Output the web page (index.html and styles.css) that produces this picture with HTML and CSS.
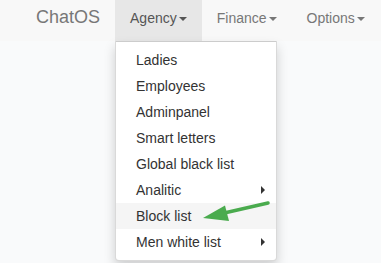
FILE: index.html
```html
<!DOCTYPE html>
<html lang="en">
<head>
    <meta charset="UTF-8">
    <title>ChatOS</title>
    <link rel="stylesheet" href="styles.css">
</head>
<body>
    <div class="navbar">
        <a class="brand" href="#">ChatOS</a>
        <ul class="nav">
            <li class="open">
                <a href="#">Agency<span class="caret"></span></a>
                <ul class="dropdown-menu">
                    <li><a href="#">Ladies</a></li>
                    <li><a href="#">Employees</a></li>
                    <li><a href="#">Adminpanel</a></li>
                    <li><a href="#">Smart letters</a></li>
                    <li><a href="#">Global black list</a></li>
                    <li class="submenu"><a href="#">Analitic<span class="arrow"></span></a></li>
                    <li class="hover"><a href="#">Block list</a></li>
                    <li class="submenu"><a href="#">Men white list<span class="arrow"></span></a></li>
                </ul>
            </li>
            <li><a href="#">Finance<span class="caret"></span></a></li>
            <li><a href="#">Options<span class="caret"></span></a></li>
        </ul>
    </div>

    <svg class="pointer" width="381" height="263" viewBox="0 0 381 263">
        <line x1="268" y1="203" x2="222" y2="213.5" stroke="#4aab4e" stroke-width="3.5" stroke-linecap="round"/>
        <polygon points="203,218 225,205.5 229,221" fill="#4aab4e"/>
    </svg>
</body>
</html>
```

FILE: styles.css
```css
body {
    margin: 0;
    font-family: "Liberation Sans", Arial, sans-serif;
    font-size: 14px;
    line-height: 20px;
    color: #333;
    background-color: #f9fafb;
    height: 263px;
    overflow: hidden;
}

.navbar {
    display: flex;
    height: 41px;
    padding-left: 21px;
    background-color: #f8f8f8;
}

.brand {
    padding: 7px 15px;
    font-size: 18px;
    line-height: 20px;
    color: #777;
    text-decoration: none;
}

.nav {
    display: flex;
    list-style: none;
    margin: 0;
    padding: 0;
}

.nav > li {
    position: relative;
}

.nav > li > a {
    display: block;
    height: 41px;
    box-sizing: border-box;
    padding: 8px 15px 13px;
    color: #777;
    text-decoration: none;
}

.nav > li.open > a {
    background-color: #e7e7e7;
    color: #555;
}

.caret {
    display: inline-block;
    width: 0;
    height: 0;
    margin-left: 2px;
    vertical-align: middle;
    border-top: 4px solid;
    border-left: 4px solid transparent;
    border-right: 4px solid transparent;
}

.dropdown-menu {
    position: absolute;
    top: 100%;
    left: 0;
    min-width: 160px;
    margin: 0;
    padding: 5px 0;
    list-style: none;
    background-color: #fff;
    border: 1px solid rgba(0, 0, 0, 0.15);
    border-top-color: #ccc;
    border-radius: 0 0 4px 4px;
    box-shadow: 0 6px 12px rgba(0, 0, 0, 0.175);
    box-sizing: content-box;
    width: 158px;
}

.dropdown-menu a {
    display: flex;
    justify-content: space-between;
    align-items: center;
    padding: 3px 20px;
    line-height: 20px;
    color: #333;
    text-decoration: none;
    white-space: nowrap;
}

.dropdown-menu .submenu a {
    padding-right: 11px;
}

.dropdown-menu .hover a {
    background-color: #f5f5f5;
}

.arrow {
    width: 0;
    height: 0;
    border-left: 4px solid #333;
    border-top: 4px solid transparent;
    border-bottom: 4px solid transparent;
}

.pointer {
    position: absolute;
    top: 0;
    left: 0;
    pointer-events: none;
}
```
